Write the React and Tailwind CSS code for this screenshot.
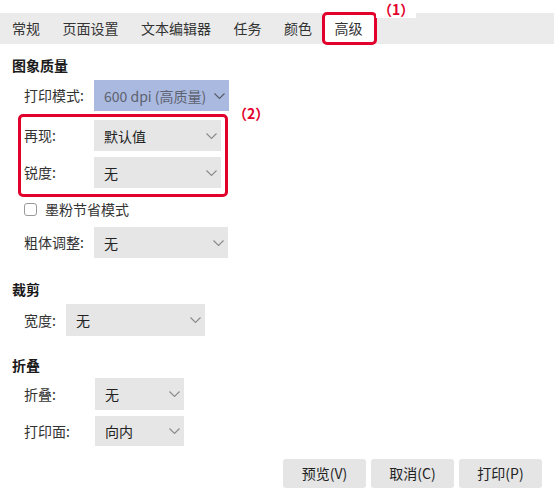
import React from 'react';

const tabs = ['常规', '页面设置', '文本编辑器', '任务', '颜色', '高级'];

const Chevron = ({ className = '' }) => (
  <svg width="11" height="6" viewBox="0 0 11 6" className={className} fill="none">
    <path d="M0.5 0.5 L5.5 5.5 L10.5 0.5" stroke="currentColor" strokeWidth="1.1" />
  </svg>
);

const Select = ({ value, width, height = 'h-[31px]', blue }) => (
  <div
    className={`flex items-center justify-between pl-[10px] pr-[4px] ${height} ${width} ${
      blue ? 'bg-[#aab9df] text-[#5d6270]' : 'bg-[#e6e6e6] text-[#222]'
    }`}
  >
    <span className="text-[14px] leading-none">{value}</span>
    <Chevron className={blue ? 'text-[#555b6a]' : 'text-[#8a8a8a]'} />
  </div>
);

const Row = ({ label, labelWidth = 'w-[70px]', children }) => (
  <div className="flex items-center">
    <span className={`${labelWidth} text-[14px] text-[#333]`}>{label}</span>
    {children}
  </div>
);

const Heading = ({ children, className = '' }) => (
  <div className={`text-[14px] font-bold leading-[20px] text-[#1a1a1a] ${className}`}>{children}</div>
);

export default function App() {
  return (
    <div
      className="relative w-[554px] h-[496px] bg-white overflow-hidden"
      style={{ fontFamily: '"Noto Sans CJK SC", "Noto Sans", sans-serif' }}
    >
      <div className="pt-[13px]">
        {/* tab strip */}
        <div className="flex h-[31px] bg-[#ebebeb] pl-[0.75px]">
          {tabs.map((t) => {
            const active = t === '高级';
            return (
              <div
                key={t}
                className={`relative flex items-center px-[11.25px] text-[14px] text-[#333] ${
                  active ? 'bg-white' : ''
                }`}
              >
                {t}
                {active && (
                  <div className="absolute -left-[1px] -right-[3px] -top-[1px] -bottom-[1px] rounded-[5px] border-[3px] border-[#e2002c]" />
                )}
              </div>
            );
          })}
        </div>
      </div>

      <span className="absolute left-[376px] top-[1px] bg-white px-[2px] text-[14px] font-bold leading-[17px] text-[#e2002c]">
        （1）
      </span>

      <div className="pl-3 pr-3 pt-[11px]">
        <Heading>图象质量</Heading>

        <div className="mt-[5px] pl-3">
          <Row label="打印模式:">
            <Select value="600 dpi (高质量)" width="w-[135px]" blue />
          </Row>
        </div>

        <div className="relative mt-[3px] ml-[6px] w-[210px] rounded-[5px] border-[3px] border-[#e2002c] pl-[3px] pt-[3px] pb-[6px]">
          <div className="flex flex-col gap-[6px]">
            <Row label="再现:">
              <Select value="默认值" width="w-[127px]" />
            </Row>
            <Row label="锐度:">
              <Select value="无" width="w-[127px]" />
            </Row>
          </div>
          <span className="absolute left-[212px] -top-[12px] text-[14px] font-bold leading-[17px] text-[#e2002c]">
            （2）
          </span>
        </div>

        <div className="mt-[4px] pl-3 flex items-center gap-[8px] h-[16px]">
          <span className="w-[13px] h-[13px] rounded-[3px] border border-[#9a9a9a] bg-white" />
          <span className="text-[14px] text-[#333]">墨粉节省模式</span>
        </div>

        <div className="mt-[10px] pl-3">
          <Row label="粗体调整:">
            <Select value="无" width="w-[134px]" />
          </Row>
        </div>

        <Heading className="mt-[21px]">裁剪</Heading>
        <div className="mt-[5px] pl-3">
          <Row label="宽度:" labelWidth="w-[42px]">
            <Select value="无" width="w-[139px]" height="h-[32px]" />
          </Row>
        </div>

        <Heading className="mt-[19px]">折叠</Heading>
        <div className="mt-[3px] pl-3 flex flex-col gap-[6px]">
          <Row label="折叠:" labelWidth="w-[71px]">
            <Select value="无" width="w-[89px]" height="h-[32px]" />
          </Row>
          <Row label="打印面:" labelWidth="w-[71px]">
            <Select value="向内" width="w-[89px]" height="h-[30px]" />
          </Row>
        </div>

        <div className="mt-[13px] flex justify-end gap-[5px]">
          {['预览(V)', '取消(C)', '打印(P)'].map((b) => (
            <button
              key={b}
              className="h-[29px] w-[83px] rounded-[3px] bg-[#e5e5e5] text-[14px] text-[#222]"
            >
              {b}
            </button>
          ))}
        </div>
      </div>
    </div>
  );
}
